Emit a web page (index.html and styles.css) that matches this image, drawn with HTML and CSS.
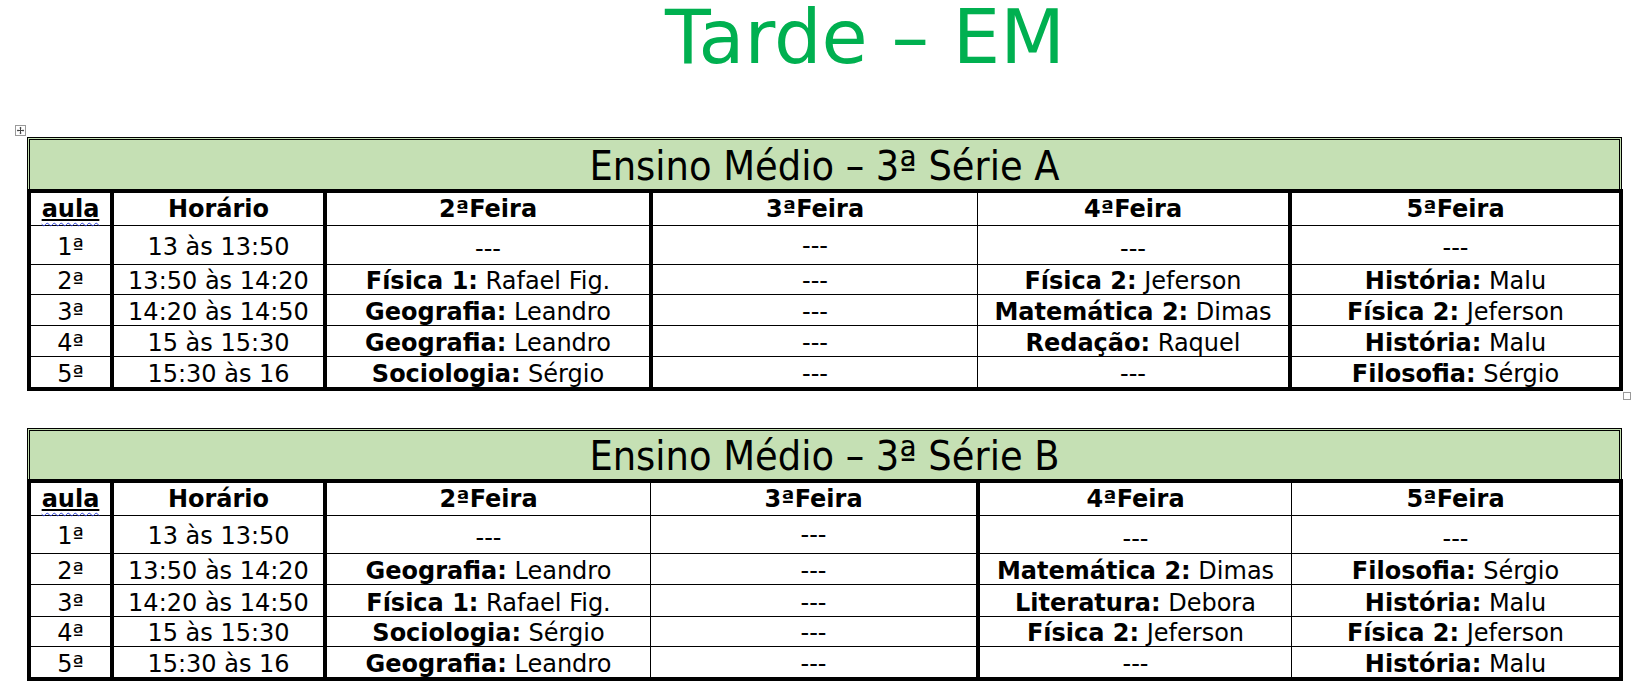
FILE: index.html
```html
<!DOCTYPE html>
<html lang="pt-BR">
<head>
<meta charset="utf-8">
<title>Tarde – EM</title>
<link rel="stylesheet" href="styles.css">
</head>
<body>
<h1 class="title">Tarde – EM</h1>

<section class="sheet">
  <span class="move-handle"><svg width="11" height="11" viewBox="0 0 11 11"><rect x="0.5" y="0.5" width="10" height="10" fill="#fff" stroke="#9a9a9a"/><path d="M5.5 2.5v6M2.5 5.5h6" stroke="#444" fill="none"/><path d="M5.5 1.8l-1.3 1.4h2.6zM5.5 9.2l-1.3-1.4h2.6zM1.8 5.5l1.4-1.3v2.6zM9.2 5.5l-1.4-1.3v2.6z" fill="#444"/></svg></span>
  <div class="cap cap-a">Ensino Médio – 3ª Série A</div>
  <table class="grid grid-a">
    <tr class="hd">
      <th class="w1 tk"><span class="spell"><span class="ul">aula</span></span></th>
      <th class="w2 tk">Horário</th>
      <th class="w3 tk">2ªFeira</th>
      <th class="w4">3ªFeira</th>
      <th class="w5 tk">4ªFeira</th>
      <th class="w6 tk">5ªFeira</th>
    </tr>
    <tr class="r1">
      <td class="tk pb4">1ª</td>
      <td class="tk pb4">13 às 13:50</td>
      <td class="tk pb2">---</td>
      <td class="pb5">---</td>
      <td class="tk pb2">---</td>
      <td class="tk pb3">---</td>
    </tr>
    <tr class="r2">
      <td class="tk">2ª</td>
      <td class="tk">13:50 às 14:20</td>
      <td class="tk"><b>Física 1:</b> Rafael Fig.</td>
      <td>---</td>
      <td class="tk"><b>Física 2:</b> Jeferson</td>
      <td class="tk"><b>História:</b> Malu</td>
    </tr>
    <tr class="r3">
      <td class="tk">3ª</td>
      <td class="tk">14:20 às 14:50</td>
      <td class="tk"><b>Geografia:</b> Leandro</td>
      <td>---</td>
      <td class="tk"><b>Matemática 2:</b> Dimas</td>
      <td class="tk"><b>Física 2:</b> Jeferson</td>
    </tr>
    <tr class="r4">
      <td class="tk">4ª</td>
      <td class="tk">15 às 15:30</td>
      <td class="tk"><b>Geografia:</b> Leandro</td>
      <td>---</td>
      <td class="tk"><b>Redação:</b> Raquel</td>
      <td class="tk"><b>História:</b> Malu</td>
    </tr>
    <tr class="r5 last">
      <td class="tk">5ª</td>
      <td class="tk">15:30 às 16</td>
      <td class="tk"><b>Sociologia:</b> Sérgio</td>
      <td>---</td>
      <td class="tk">---</td>
      <td class="tk"><b>Filosofia:</b> Sérgio</td>
    </tr>
  </table>
  <span class="resize-handle"></span>
</section>

<section class="sheet sheet-b">
  <div class="cap cap-b">Ensino Médio – 3ª Série B</div>
  <table class="grid grid-b">
    <tr class="hd">
      <th class="w1 tk"><span class="spell"><span class="ul">aula</span></span></th>
      <th class="w2 tk">Horário</th>
      <th class="w3b">2ªFeira</th>
      <th class="w4b tk">3ªFeira</th>
      <th class="w5b">4ªFeira</th>
      <th class="w6 tk">5ªFeira</th>
    </tr>
    <tr class="r1b">
      <td class="tk pb4">1ª</td>
      <td class="tk pb4">13 às 13:50</td>
      <td class="pb2">---</td>
      <td class="tk pb5">---</td>
      <td class="pb1">---</td>
      <td class="tk pb1">---</td>
    </tr>
    <tr class="r2b">
      <td class="tk">2ª</td>
      <td class="tk">13:50 às 14:20</td>
      <td><b>Geografia:</b> Leandro</td>
      <td class="tk">---</td>
      <td><b>Matemática 2:</b> Dimas</td>
      <td class="tk"><b>Filosofia:</b> Sérgio</td>
    </tr>
    <tr class="r3b">
      <td class="tk">3ª</td>
      <td class="tk">14:20 às 14:50</td>
      <td><b>Física 1:</b> Rafael Fig.</td>
      <td class="tk">---</td>
      <td><b>Literatura:</b> Debora</td>
      <td class="tk"><b>História:</b> Malu</td>
    </tr>
    <tr class="r4b">
      <td class="tk">4ª</td>
      <td class="tk">15 às 15:30</td>
      <td><b>Sociologia:</b> Sérgio</td>
      <td class="tk">---</td>
      <td><b>Física 2:</b> Jeferson</td>
      <td class="tk"><b>Física 2:</b> Jeferson</td>
    </tr>
    <tr class="r5b last">
      <td class="tk">5ª</td>
      <td class="tk">15:30 às 16</td>
      <td><b>Geografia:</b> Leandro</td>
      <td class="tk">---</td>
      <td>---</td>
      <td class="tk"><b>História:</b> Malu</td>
    </tr>
  </table>
</section>
</body>
</html>
```

FILE: styles.css
```css
html, body {
  margin: 0;
  padding: 0;
  background: #fff;
}

body {
  font-family: "DejaVu Sans", Verdana, sans-serif;
  color: #000;
}

.title {
  box-sizing: border-box;
  height: 75px;
  margin: 0;
  padding: 0 0 0 80px;
  font-size: 75px;
  line-height: 75px;
  font-weight: normal;
  text-align: center;
  color: #00b050;
  white-space: nowrap;
}

.sheet {
  position: relative;
  width: 1596px;
  margin: 62px 0 0 27px;
}

.sheet-b {
  margin-top: 37px;
}

.move-handle {
  position: absolute;
  left: -12px;
  top: -12px;
  width: 11px;
  height: 11px;
  line-height: 0;
}

.resize-handle {
  position: absolute;
  left: 1596px;
  top: 255px;
  box-sizing: border-box;
  width: 8px;
  height: 8px;
  border: 1px solid #9a9a9a;
  background: #fff;
}

.cap {
  box-sizing: border-box;
  width: 1595px;
  border: 3px double #000;
  border-bottom: 0;
  background: #c5e0b4;
  text-align: center;
  font-family: "DejaVu Sans Condensed", "DejaVu Sans", sans-serif;
  font-stretch: condensed;
  font-size: 41px;
  line-height: 46px;
  white-space: nowrap;
}

.cap-a {
  height: 52px;
  padding-top: 3px;
}

.cap-b {
  height: 51px;
  padding-top: 2px;
}

.grid {
  border-collapse: separate;
  border-spacing: 0;
  table-layout: fixed;
  width: 1596px;
  border-left: 4px solid #000;
  border-top: 4px solid #000;
}

.grid th,
.grid td {
  box-sizing: border-box;
  padding: 0 2px;
  border-right: 1px solid #000;
  border-bottom: 1px solid #000;
  text-align: center;
  white-space: nowrap;
  font-size: 24px;
  line-height: 26px;
  vertical-align: bottom;
}

.grid th {
  font-weight: bold;
  vertical-align: middle;
}

.grid b {
  font-weight: bold;
}

.grid .tk {
  border-right-width: 4px;
}

.grid .last td {
  border-bottom-width: 4px;
}

/* column widths (border-box) */
.w1 { width: 83px; }
.w2 { width: 213px; }
.w3 { width: 326px; }
.w4 { width: 325px; }
.w5 { width: 314px; }
.w6 { width: 331px; }
.w3b { width: 324px; }
.w4b { width: 329px; }
.w5b { width: 312px; }

/* row heights (border-box) */
.hd th { height: 33px; }
.r1 td { height: 39px; }
.r2 td { height: 30px; }
.r3 td { height: 31px; }
.r4 td { height: 31px; }
.r5 td { height: 34px; }
.r1b td { height: 38px; }
.r2b td { height: 31px; }
.r3b td { height: 32px; }
.r4b td { height: 30px; }
.r5b td { height: 34px; }

.grid .pb1 { padding-bottom: 1px; }
.grid .pb2 { padding-bottom: 2px; }
.grid .pb3 { padding-bottom: 3px; }
.grid .pb4 { padding-bottom: 4px; }
.grid .pb5 { padding-bottom: 5px; }

.spell {
  text-decoration: underline wavy #2b3fd6;
  text-decoration-thickness: 1px;
  text-underline-offset: 5px;
}

.ul {
  text-decoration: underline solid #000;
  text-decoration-thickness: 2px;
  text-underline-offset: 2px;
}
```
